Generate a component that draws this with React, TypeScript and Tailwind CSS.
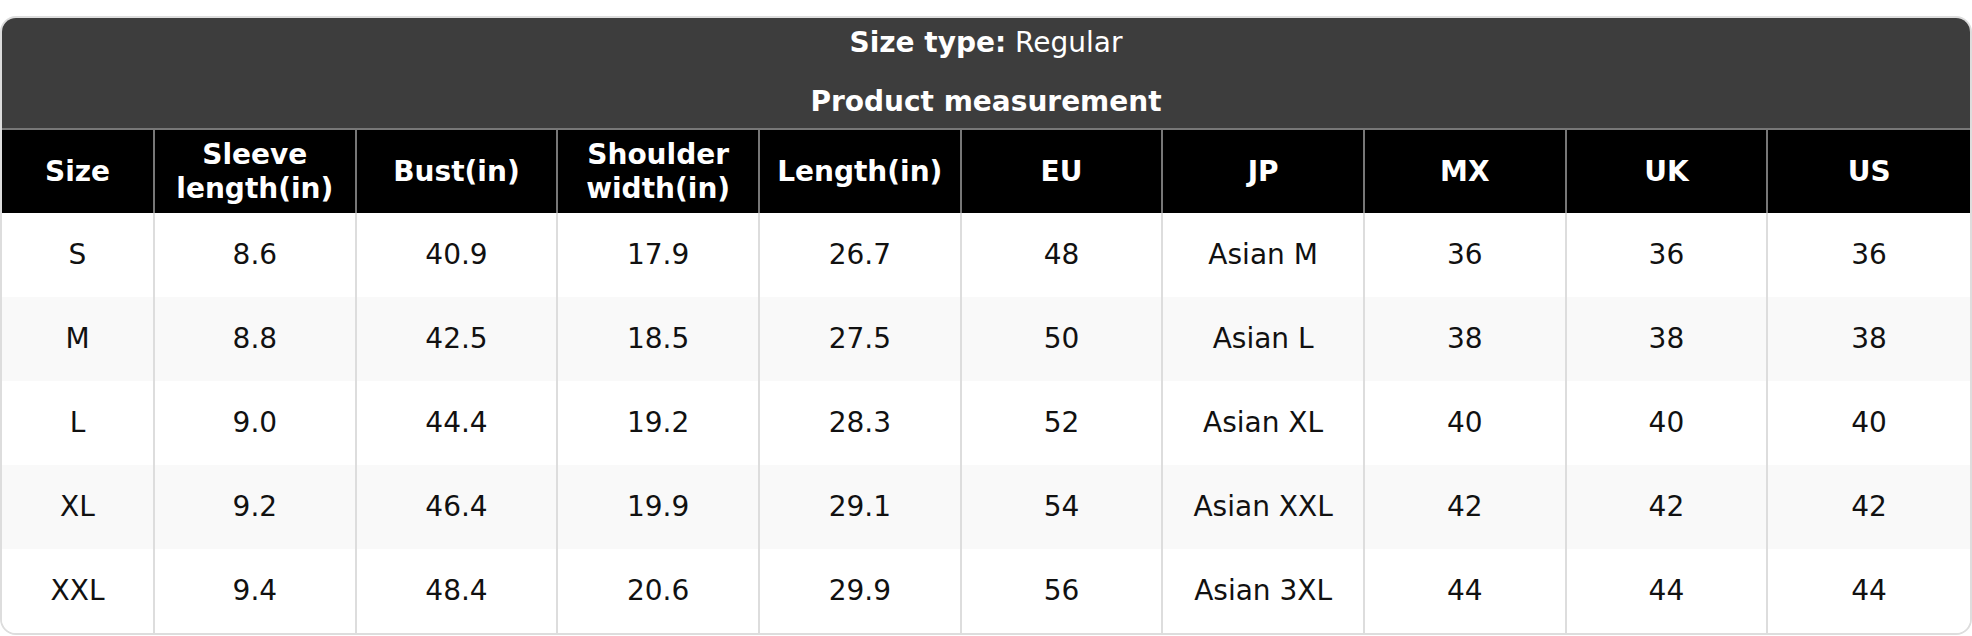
// Size chart table: dark title band, black column headers, striped rows

const columns = [
  'Size',
  'Sleeve length(in)',
  'Bust(in)',
  'Shoulder width(in)',
  'Length(in)',
  'EU',
  'JP',
  'MX',
  'UK',
  'US',
];

const headerLines: Record<string, string[]> = {
  'Sleeve length(in)': ['Sleeve', 'length(in)'],
  'Shoulder width(in)': ['Shoulder', 'width(in)'],
};

const rows = [
  ['S', '8.6', '40.9', '17.9', '26.7', '48', 'Asian M', '36', '36', '36'],
  ['M', '8.8', '42.5', '18.5', '27.5', '50', 'Asian L', '38', '38', '38'],
  ['L', '9.0', '44.4', '19.2', '28.3', '52', 'Asian XL', '40', '40', '40'],
  ['XL', '9.2', '46.4', '19.9', '29.1', '54', 'Asian XXL', '42', '42', '42'],
  ['XXL', '9.4', '48.4', '20.6', '29.9', '56', 'Asian 3XL', '44', '44', '44'],
];

export default function App() {
  return (
    <div className="pt-4 bg-white" style={{ fontFamily: '"DejaVu Sans", sans-serif' }}>
      <div className="border-2 border-[#dddddd] rounded-2xl overflow-hidden">
        <table className="w-full table-fixed border-separate border-spacing-0 text-[28px] leading-[1.18]">
          <colgroup>
            <col className="w-[153px]" />
            {columns.slice(1).map((c) => (
              <col key={c} />
            ))}
          </colgroup>
          <thead>
            <tr>
              <th colSpan={10} className="bg-[#3d3d3d] text-white h-[56px] pb-[6px] align-middle font-normal">
                <span className="font-bold">Size type:</span> Regular
              </th>
            </tr>
            <tr>
              <th colSpan={10} className="bg-[#3d3d3d] text-white h-[54px] pt-[2px] align-middle font-bold">
                Product measurement
              </th>
            </tr>
            <tr>
              {columns.map((c, i) => (
                <th
                  key={c}
                  className={`bg-black text-white font-bold h-[85px] align-middle border-t-2 border-[#777777] ${
                    i < columns.length - 1 ? 'border-r-2' : ''
                  }`}
                >
                  {headerLines[c] ? (
                    <>
                      {headerLines[c][0]}
                      <br />
                      {headerLines[c][1]}
                    </>
                  ) : (
                    c
                  )}
                </th>
              ))}
            </tr>
          </thead>
          <tbody>
            {rows.map((r, ri) => (
              <tr key={r[0]} className={ri % 2 === 1 ? 'bg-[#f9f9f9]' : 'bg-white'}>
                {r.map((v, i) => (
                  <td
                    key={i}
                    className={`h-[84px] text-center align-middle text-[#111111] border-[#dddddd] ${
                      i < r.length - 1 ? 'border-r-2' : ''
                    }`}
                  >
                    {v}
                  </td>
                ))}
              </tr>
            ))}
          </tbody>
        </table>
      </div>
    </div>
  );
}
